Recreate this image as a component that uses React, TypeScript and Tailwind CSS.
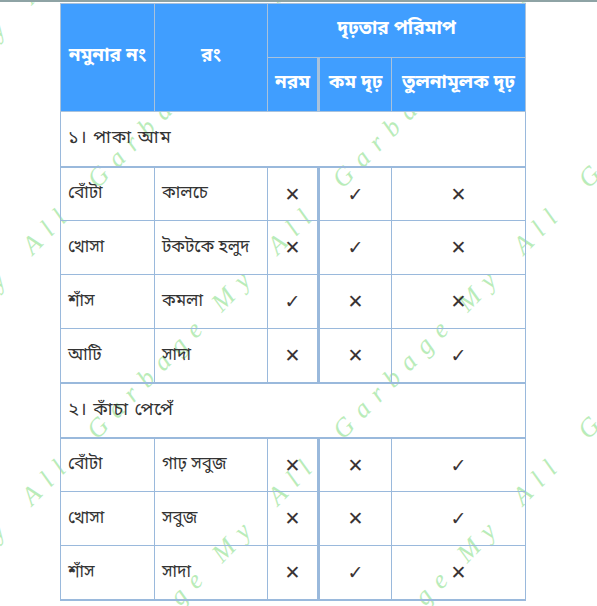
const X = "✕";
const V = "✓";

const sections = [
  {
    title: "১। পাকা আম",
    rows: [
      ["বোঁটা", "কালচে", X, V, X],
      ["খোসা", "টকটকে হলুদ", X, V, X],
      ["শাঁস", "কমলা", V, X, X],
      ["আটি", "সাদা", X, X, V],
    ],
  },
  {
    title: "২। কাঁচা পেপেঁ",
    rows: [
      ["বোঁটা", "গাঢ় সবুজ", X, X, V],
      ["খোসা", "সবুজ", X, X, V],
      ["শাঁস", "সাদা", X, V, X],
    ],
  },
];

// diagonal watermark lines, one per tile column
const marks = [-2, -1, 0, 1, 2, 3].map((k) => ({
  left: 97 + 245.5 * k - 491 - 15,
  top: 931 - 4,
}));

function Watermark() {
  return (
    <div className="pointer-events-none absolute inset-0 overflow-hidden">
      {marks.map((m, i) => (
        <div
          key={i}
          className="absolute flex origin-top-left rotate-[-45.6deg] whitespace-nowrap font-['Liberation_Serif',serif] text-[26px] italic leading-[26px] tracking-[10px] text-[#b9ecb9]"
          style={{ left: m.left, top: m.top }}
        >
          {[0, 1, 2, 3, 4, 5].map((j) => (
            <div key={j} className="flex">
              <span className="inline-block w-[178px]">Garbage</span>
              <span className="inline-block w-[80px]">My</span>
              <span className="inline-block w-[93px]">All</span>
            </div>
          ))}
        </div>
      ))}
    </div>
  );
}

export default function App() {
  return (
    <div className="relative h-[606px] w-[597px] overflow-hidden bg-white font-['Noto_Sans_Bengali','Noto_Sans',sans-serif] text-[17px] text-[#333]">
      <div className="relative z-10 h-[2px] bg-[#8ea3a5]" />
      <Watermark />
      <table className="relative z-10 ml-[60px] mt-[1px] w-[465px] table-fixed border-collapse border border-[#9ab9dc]">
        <colgroup>
          <col className="w-[94px]" />
          <col className="w-[113px]" />
          <col className="w-[51px]" />
          <col className="w-[73px]" />
          <col className="w-[134px]" />
        </colgroup>
        <thead className="bg-[#409eff] text-[19px] font-bold text-white">
          <tr className="h-[54px]">
            <th rowSpan={2} className="border border-[#a9c2dc] px-0 text-center whitespace-nowrap">
              নমুনার নং
            </th>
            <th rowSpan={2} className="border border-[#a9c2dc] px-1 text-center">
              রং
            </th>
            <th colSpan={3} className="border border-[#a9c2dc] text-center">
              দৃঢ়তার পরিমাপ
            </th>
          </tr>
          <tr className="h-[54px]">
            <th className="border border-[#a9c2dc] px-0 text-center whitespace-nowrap">নরম</th>
            <th className="border border-[#a9c2dc] border-l-[3px] px-0 text-center whitespace-nowrap">কম দৃঢ়</th>
            <th className="border border-[#a9c2dc] px-0 text-center whitespace-nowrap">তুলনামূলক দৃঢ়</th>
          </tr>
        </thead>
        <tbody>
          {sections.map((s, si) => (
            <Section key={si} title={s.title} rows={s.rows} />
          ))}
        </tbody>
      </table>
    </div>
  );
}

function Section({ title, rows }: { title: string; rows: string[][] }) {
  return (
    <>
      <tr className="h-[55px] border-b-2 border-[#9ab9dc]">
        <td colSpan={5} className="border border-b-2 border-[#9ab9dc] px-[7px] text-[18px] tracking-[1px]">
          {title}
        </td>
      </tr>
      {rows.map((r, i) => (
        <tr
          key={i}
          className={i === rows.length - 1 ? "h-[54px] border-b-2 border-[#9ab9dc]" : "h-[54px]"}
        >
          <td className="border border-[#9ab9dc] px-[7px] whitespace-nowrap">{r[0]}</td>
          <td className="border border-[#9ab9dc] px-[7px] whitespace-nowrap">{r[1]}</td>
          <td className="border border-[#9ab9dc] text-center font-['DejaVu_Sans',sans-serif] text-[19px] text-[#3a3434]">{r[2]}</td>
          <td className="border border-[#9ab9dc] border-l-[3px] text-center font-['DejaVu_Sans',sans-serif] text-[19px] text-[#3a3434]">{r[3]}</td>
          <td className="border border-[#9ab9dc] text-center font-['DejaVu_Sans',sans-serif] text-[19px] text-[#3a3434]">{r[4]}</td>
        </tr>
      ))}
    </>
  );
}
